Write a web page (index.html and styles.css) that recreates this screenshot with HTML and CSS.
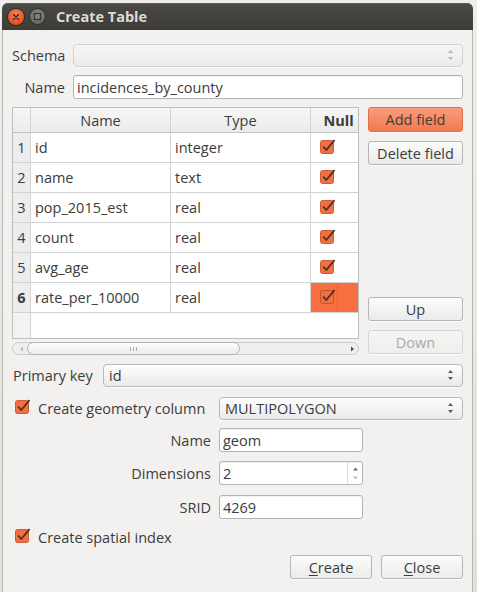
FILE: index.html
```html
<!DOCTYPE html>
<html>
<head>
<meta charset="utf-8">
<title>Create Table</title>
<link rel="stylesheet" href="styles.css">
</head>
<body>
<div class="screen">
  <div class="window">
    <div class="titlebar">
      <span class="wbtn close">
        <svg width="16" height="16" viewBox="0 0 16 16"><path d="M5.5 5.5 L10.5 10.5 M10.5 5.5 L5.5 10.5" stroke="#3b2418" stroke-width="1.4" stroke-linecap="round"/></svg>
      </span>
      <span class="wbtn min">
        <svg width="15" height="15" viewBox="0 0 15 15"><rect x="4.5" y="4.5" width="6" height="6" fill="none" stroke="#35342f" stroke-width="1.2"/></svg>
      </span>
      <span class="title">Create Table</span>
    </div>

    <div class="content">
      <div class="row r-schema">
        <span class="lbl lbl-top">Schema</span>
        <div class="combo disabled grow">
          <span class="ctext"></span>
          <svg class="arrows" width="7" height="12" viewBox="0 0 7 12"><path d="M3.5 1 L6 4 L1 4 Z M3.5 11 L6 8 L1 8 Z" fill="#b5b5b5"/></svg>
        </div>
      </div>

      <div class="row r-name">
        <span class="lbl lbl-top">Name</span>
        <div class="input grow">incidences_by_county</div>
      </div>

      <div class="fields">
        <div class="tablecol">
          <div class="table">
            <div class="cell hdr corner"></div>
            <div class="cell hdr">Name</div>
            <div class="cell hdr">Type</div>
            <div class="cell hdr hnull">Null</div>

            <div class="cell rh">1</div><div class="cell">id</div><div class="cell">integer</div><div class="cell chk"><svg width="16" height="16" viewBox="0 0 16 16"><rect x="0.5" y="1.5" width="13" height="13" rx="2" fill="#f2703f" stroke="#cf5a33"/><path d="M3.2 7.6 L6.3 11 L14.5 1.2" fill="none" stroke="#4d3028" stroke-width="1.8"/></svg></div>
            <div class="cell rh">2</div><div class="cell">name</div><div class="cell">text</div><div class="cell chk"><svg width="16" height="16" viewBox="0 0 16 16"><rect x="0.5" y="1.5" width="13" height="13" rx="2" fill="#f2703f" stroke="#cf5a33"/><path d="M3.2 7.6 L6.3 11 L14.5 1.2" fill="none" stroke="#4d3028" stroke-width="1.8"/></svg></div>
            <div class="cell rh">3</div><div class="cell">pop_2015_est</div><div class="cell">real</div><div class="cell chk"><svg width="16" height="16" viewBox="0 0 16 16"><rect x="0.5" y="1.5" width="13" height="13" rx="2" fill="#f2703f" stroke="#cf5a33"/><path d="M3.2 7.6 L6.3 11 L14.5 1.2" fill="none" stroke="#4d3028" stroke-width="1.8"/></svg></div>
            <div class="cell rh">4</div><div class="cell">count</div><div class="cell">real</div><div class="cell chk"><svg width="16" height="16" viewBox="0 0 16 16"><rect x="0.5" y="1.5" width="13" height="13" rx="2" fill="#f2703f" stroke="#cf5a33"/><path d="M3.2 7.6 L6.3 11 L14.5 1.2" fill="none" stroke="#4d3028" stroke-width="1.8"/></svg></div>
            <div class="cell rh">5</div><div class="cell">avg_age</div><div class="cell">real</div><div class="cell chk"><svg width="16" height="16" viewBox="0 0 16 16"><rect x="0.5" y="1.5" width="13" height="13" rx="2" fill="#f2703f" stroke="#cf5a33"/><path d="M3.2 7.6 L6.3 11 L14.5 1.2" fill="none" stroke="#4d3028" stroke-width="1.8"/></svg></div>
            <div class="cell rh cur">6</div><div class="cell">rate_per_10000</div><div class="cell">real</div><div class="cell chk sel"><svg width="16" height="16" viewBox="0 0 16 16"><rect x="0.5" y="1.5" width="13" height="13" rx="2" fill="#f2703f" stroke="#c4532d"/><path d="M3.2 7.6 L6.3 11 L14.5 1.2" fill="none" stroke="#4d3028" stroke-width="1.8"/></svg><span class="focus"></span></div>

            <div class="cell rh empty"></div><div class="cell empty span3"></div>
          </div>
          <div class="hscroll">
            <svg class="sarrow" width="5" height="6" viewBox="0 0 5 6"><path d="M4 0.5 L1 3 L4 5.5 Z" fill="#bdbdbd"/></svg>
            <div class="thumb"><span class="grip"></span></div>
            <svg class="sarrow right" width="5" height="6" viewBox="0 0 5 6"><path d="M1 0.5 L4 3 L1 5.5 Z" fill="#4a4a4a"/></svg>
          </div>
        </div>
        <div class="side">
          <div class="btn accent">Add field</div>
          <div class="btn">Delete field</div>
          <div class="side-spacer"></div>
          <div class="btn">Up</div>
          <div class="btn disabled">Down</div>
        </div>
      </div>

      <div class="row r-pk">
        <span class="lbl lbl-pk">Primary key</span>
        <div class="combo grow">
          <span class="ctext">id</span>
          <svg class="arrows" width="7" height="12" viewBox="0 0 7 12"><path d="M3.5 1 L6 4 L1 4 Z M3.5 11 L6 8 L1 8 Z" fill="#5a5a5a"/></svg>
        </div>
      </div>

      <div class="row r-geom">
        <div class="checkline">
          <svg class="cb" width="16" height="16" viewBox="0 0 16 16"><rect x="0.5" y="1.5" width="13" height="13" rx="2" fill="#f2703f" stroke="#cf5a33"/><path d="M3.2 7.6 L6.3 11 L14.5 1.2" fill="none" stroke="#4d3028" stroke-width="1.8"/></svg>
          <span>Create geometry column</span>
        </div>
        <div class="combo grow">
          <span class="ctext">MULTIPOLYGON</span>
          <svg class="arrows" width="7" height="12" viewBox="0 0 7 12"><path d="M3.5 1 L6 4 L1 4 Z M3.5 11 L6 8 L1 8 Z" fill="#5a5a5a"/></svg>
        </div>
      </div>

      <div class="row r-gname">
        <span class="lbl lbl-form">Name</span>
        <div class="input short">geom</div>
      </div>

      <div class="row r-dim">
        <span class="lbl lbl-form">Dimensions</span>
        <div class="input short spin">
          <span class="spintext">2</span>
          <span class="spinbtns">
            <svg width="7" height="6" viewBox="0 0 7 6"><path d="M3.5 1.5 L6 4.5 L1 4.5 Z" fill="#6a6a6a"/></svg>
            <svg width="7" height="6" viewBox="0 0 7 6"><path d="M3.5 4.5 L6 1.5 L1 1.5 Z" fill="#bdbdbd"/></svg>
          </span>
        </div>
      </div>

      <div class="row r-srid">
        <span class="lbl lbl-form">SRID</span>
        <div class="input short">4269</div>
      </div>

      <div class="row r-spatial">
        <div class="checkline">
          <svg class="cb" width="16" height="16" viewBox="0 0 16 16"><rect x="0.5" y="1.5" width="13" height="13" rx="2" fill="#f2703f" stroke="#cf5a33"/><path d="M3.2 7.6 L6.3 11 L14.5 1.2" fill="none" stroke="#4d3028" stroke-width="1.8"/></svg>
          <span>Create spatial index</span>
        </div>
      </div>

      <div class="row r-footer">
        <div class="btn fbtn"><u>C</u>reate</div>
        <div class="btn fbtn"><u>C</u>lose</div>
      </div>
    </div>
  </div>
</div>
</body>
</html>
```

FILE: styles.css
```css
html, body {
  margin: 0;
  padding: 0;
}
body {
  width: 477px;
  height: 592px;
  overflow: hidden;
  background: #dcdad6;
  font-family: "Open Sans", "Noto Sans", "DejaVu Sans", sans-serif;
  font-size: 14.5px;
  color: #3c3c3c;
}
.screen {
  width: 477px;
  height: 592px;
  padding-top: 3px;
  box-sizing: border-box;
  background: linear-gradient(#efeeec, #e2e0dc);
}
.window {
  margin-left: 2px;
  width: 471px;
  height: 589px;
  display: flex;
  flex-direction: column;
}
.titlebar {
  height: 27px;
  flex: none;
  display: flex;
  align-items: center;
  padding-left: 6px;
  border-radius: 6px 6px 0 0;
  background: linear-gradient(#4b4a45, #3c3b37);
  box-shadow: inset 0 1px 0 #5e5d57;
}
.wbtn {
  display: flex;
  align-items: center;
  justify-content: center;
  border-radius: 50%;
  flex: none;
}
.wbtn.close {
  width: 16px;
  height: 16px;
  background: radial-gradient(circle at 50% 35%, #f9865b, #e6501f 70%, #c43b12);
  box-shadow: 0 0 0 1px #2f2e2a;
}
.wbtn.min {
  width: 15px;
  height: 15px;
  margin-left: 6px;
  background: radial-gradient(circle at 50% 35%, #8a8882, #6a6964 70%, #57564f);
  box-shadow: 0 0 0 1px #2f2e2a;
}
.title {
  margin-left: 11px;
  font-weight: bold;
  font-size: 14.5px;
  color: #dfdbd2;
}
.content {
  flex: 1;
  background: #f2f1f0;
  border-left: 1px solid #b8b6b1;
  border-right: 1px solid #b8b6b1;
  padding: 13px 9px 0 9px;
  display: flex;
  flex-direction: column;
}
.row {
  display: flex;
  align-items: center;
  height: 24px;
  flex: none;
}
.lbl {
  flex: none;
  text-align: right;
  margin-right: 8px;
}
.lbl-top { width: 53px; }
.lbl-pk { width: 83px; text-align: left; padding-left: 1px; box-sizing: border-box; }
.lbl-form { width: 199px; }
.grow { flex: 1; }

.combo {
  height: 23px;
  box-sizing: border-box;
  border: 1px solid #b9b9b9;
  border-radius: 4px;
  background: linear-gradient(#fdfdfd, #ebeaea);
  display: flex;
  align-items: center;
  padding: 0 8px 0 5px;
  box-shadow: 0 1px 0 rgba(255,255,255,0.7);
}
.combo.disabled {
  border-color: #d2d1cf;
  background: linear-gradient(#f6f5f4, #edecea);
}
.ctext { flex: 1; }
.arrows { flex: none; }

.input {
  height: 24px;
  box-sizing: border-box;
  border: 1px solid #b3b3b3;
  border-radius: 3px;
  background: #ffffff;
  box-shadow: inset 0 1px 1px rgba(0,0,0,0.06);
  padding: 0 3px;
  display: flex;
  align-items: center;
}
.input.short { width: 144px; flex: none; }

.r-schema { margin-top: 0; }
.r-name { margin-top: 8px; }
.fields {
  margin-top: 8px;
  display: flex;
  height: 248px;
  flex: none;
}
.tablecol {
  width: 347px;
  flex: none;
  display: flex;
  flex-direction: column;
}
.table {
  height: 232px;
  box-sizing: border-box;
  border: 1px solid #bdbdbd;
  background: #ffffff;
  display: grid;
  grid-template-columns: 18px 140px 140px 47px;
  grid-template-rows: 25px repeat(6, 30px) 1fr;
}
.cell {
  border-right: 1px solid #d3d3d3;
  border-bottom: 1px solid #d3d3d3;
  display: flex;
  align-items: center;
  padding-left: 4px;
  white-space: nowrap;
  overflow: hidden;
}
.cell:nth-child(4n) { border-right: none; }
.hdr {
  background: linear-gradient(#f7f7f7, #ebebeb);
  justify-content: center;
  padding-left: 0;
  border-bottom-color: #c4c4c4;
}
.hnull { font-weight: bold; padding-left: 8px; }
.rh {
  background: #ededed;
  justify-content: center;
  padding-left: 0;
}
.rh.cur { font-weight: bold; }
.chk {
  padding-left: 9px;
  position: relative;
}
.chk svg { margin-top: -2px; }
.chk.sel { background: #f7703f; }
.focus {
  position: absolute;
  left: 26px;
  top: 0;
  bottom: 0;
  border-left: 1px dotted #d85a30;
}
.empty { border-bottom: none; }
.rh.empty { background: #f3f3f3; }
.span3 { grid-column: span 3; border-right: none; }

.hscroll {
  margin-top: 3px;
  height: 13px;
  box-sizing: border-box;
  border: 1px solid #cacaca;
  border-radius: 7px;
  background: #efefef;
  display: flex;
  align-items: center;
  padding: 0 3px 0 6px;
}
.sarrow { flex: none; }
.thumb {
  margin-left: 3px;
  width: 213px;
  height: 13px;
  box-sizing: border-box;
  border: 1px solid #b3b3b3;
  border-radius: 7px;
  background: linear-gradient(#fefefe, #ececec);
  display: flex;
  align-items: center;
  justify-content: center;
}
.grip {
  width: 5px;
  height: 4px;
  border-left: 1px solid #b0b0b0;
  border-right: 1px solid #b0b0b0;
  position: relative;
}
.grip::after {
  content: "";
  position: absolute;
  left: 2px;
  top: 0;
  height: 4px;
  border-left: 1px solid #b0b0b0;
}
.sarrow.right { margin-left: auto; }

.side {
  margin-left: 9px;
  width: 95px;
  flex: none;
  display: flex;
  flex-direction: column;
}
.side-spacer { flex: 1; }
.btn {
  height: 24px;
  box-sizing: border-box;
  border: 1px solid #b6b6b6;
  border-radius: 3px;
  background: linear-gradient(#fcfcfc, #ebebea);
  box-shadow: 0 1px 0 rgba(255,255,255,0.8);
  display: flex;
  align-items: center;
  justify-content: center;
  white-space: nowrap;
}
.side .btn:nth-child(1) { height: 25px; }
.side .btn:nth-child(2) { margin-top: 9px; }
.side .btn:nth-child(5) { margin-top: 9px; margin-bottom: 1px; }
.btn.accent {
  border-color: #d8734f;
  background: linear-gradient(#f99c7b, #f4794f);
}
.btn.disabled {
  color: #a9a9a9;
  border-color: #d6d5d3;
  background: linear-gradient(#f6f5f4, #efeeed);
}

.r-pk { margin-top: 8px; }
.r-geom { margin-top: 9px; }
.checkline {
  display: flex;
  align-items: center;
  padding-left: 3px;
  flex: none;
}
.r-geom .checkline { width: 207px; box-sizing: border-box; }
.cb { flex: none; margin-right: 7px; margin-top: -2px; }
.r-gname { margin-top: 8px; }
.r-dim { margin-top: 9px; }
.r-srid { margin-top: 10px; }
.r-spatial { margin-top: 7px; height: 22px; }
.spin { padding-right: 0; }
.spintext { flex: 1; }
.spinbtns {
  width: 15px;
  height: 22px;
  border-left: 1px solid #dcdcdc;
  display: flex;
  flex-direction: column;
  align-items: center;
  justify-content: space-around;
  padding: 2px 0;
  box-sizing: border-box;
}
.r-footer {
  margin-top: 7px;
  justify-content: flex-end;
  gap: 9px;
}
.fbtn { width: 82px; }
.fbtn u { text-decoration-thickness: 1px; text-underline-offset: 2px; }
```
